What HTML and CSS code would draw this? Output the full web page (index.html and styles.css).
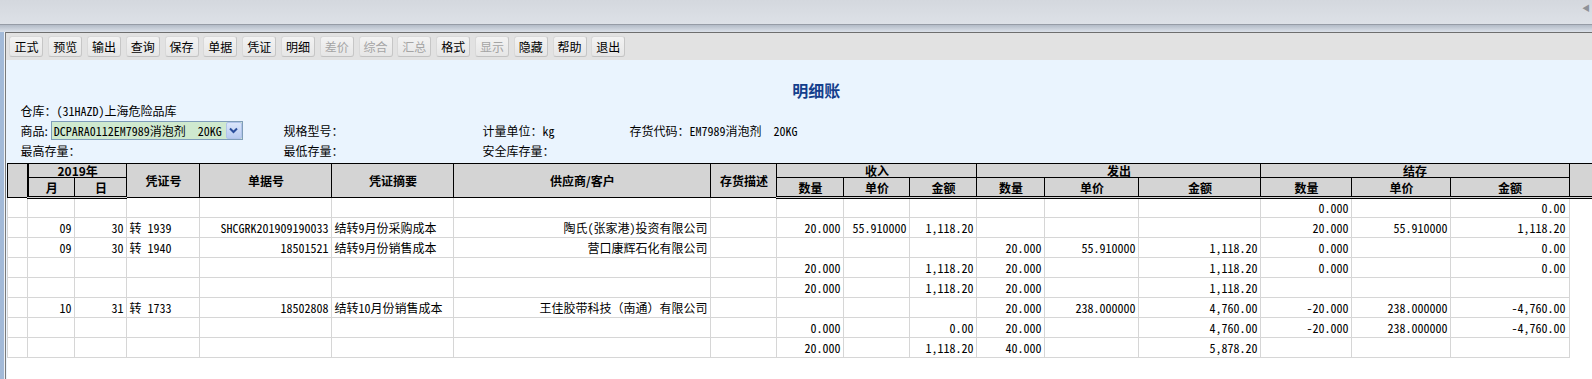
FILE: index.html
```html
<!DOCTYPE html>
<html lang="zh-CN">
<head>
    <meta charset="UTF-8">
    <title>明细账</title>
    <link rel="stylesheet" href="styles.css">
</head>
<body>
    <div class="titlebar">
        <span class="collapse">&#9664;</span>
    </div>
    <div class="rule"></div>

    <div class="main">
        <div class="side"></div>
        <div class="frame">
            <div class="toolbar">
                <span class="btn">正式</span>
                <span class="btn">预览</span>
                <span class="btn">输出</span>
                <span class="btn">查询</span>
                <span class="btn">保存</span>
                <span class="btn">单据</span>
                <span class="btn">凭证</span>
                <span class="btn">明细</span>
                <span class="btn off">差价</span>
                <span class="btn off">综合</span>
                <span class="btn off">汇总</span>
                <span class="btn">格式</span>
                <span class="btn off">显示</span>
                <span class="btn">隐藏</span>
                <span class="btn">帮助</span>
                <span class="btn">退出</span>
            </div>

            <div class="content">
                <div class="title">明细账</div>

                <div class="info">
                    <div class="wide">仓库：<span class="mono">(31HAZD)</span>上海危险品库</div>
                    <div class="goods">
                        <span>商品:</span>
                        <div class="select">
                            <span class="mono">DCPARA0112EM7989消泡剂  20KG</span>
                            <span class="drop">
                                <svg width="9" height="7" viewBox="0 0 9 7"><path d="M1 1.5 L4.5 5 L8 1.5" fill="none" stroke="#2b4f9c" stroke-width="2"/></svg>
                            </span>
                        </div>
                    </div>
                    <div>规格型号：</div>
                    <div>计量单位：<span class="mono">kg</span></div>
                    <div>存货代码：<span class="mono">EM7989消泡剂  20KG</span></div>
                    <div>最高存量：</div>
                    <div>最低存量：</div>
                    <div>安全库存量：</div>
                    <div></div>
                </div>

                <div class="grid-wrap">
                    <table class="ledger">
                        <colgroup>
                            <col style="width:20px"><col style="width:47px"><col style="width:52px">
                            <col style="width:73px"><col style="width:132px"><col style="width:122px">
                            <col style="width:257px"><col style="width:66px">
                            <col style="width:67px"><col style="width:66px"><col style="width:67px">
                            <col style="width:68px"><col style="width:94px"><col style="width:122px">
                            <col style="width:91px"><col style="width:99px"><col style="width:118px">
                            <col style="width:23px">
                        </colgroup>
                        <thead>
                            <tr class="r1">
                                <th rowspan="2"></th>
                                <th colspan="2" class="ym">2019年</th>
                                <th rowspan="2">凭证号</th>
                                <th rowspan="2">单据号</th>
                                <th rowspan="2">凭证摘要</th>
                                <th rowspan="2">供应商/客户</th>
                                <th rowspan="2">存货描述</th>
                                <th colspan="3">收入</th>
                                <th colspan="3">发出</th>
                                <th colspan="3">结存</th>
                                <th rowspan="2" class="filler"></th>
                            </tr>
                            <tr class="r2">
                                <th class="ym">月</th>
                                <th>日</th>
                                <th>数量</th><th>单价</th><th>金额</th>
                                <th>数量</th><th>单价</th><th>金额</th>
                                <th>数量</th><th>单价</th><th>金额</th>
                            </tr>
                        </thead>
                        <tbody>
                            <tr>
                                <td></td><td></td><td></td><td></td><td></td><td></td><td></td><td></td>
                                <td></td><td></td><td></td>
                                <td></td><td></td><td></td>
                                <td>0.000</td><td></td><td>0.00</td>
                                <td class="blank"></td>
                            </tr>
                            <tr>
                                <td></td><td>09</td><td>30</td><td class="l">转 1939</td><td>SHCGRK201909190033</td>
                                <td class="l">结转9月份采购成本</td><td>陶氏(张家港)投资有限公司</td><td></td>
                                <td>20.000</td><td>55.910000</td><td>1,118.20</td>
                                <td></td><td></td><td></td>
                                <td>20.000</td><td>55.910000</td><td>1,118.20</td>
                                <td class="blank"></td>
                            </tr>
                            <tr>
                                <td></td><td>09</td><td>30</td><td class="l">转 1940</td><td>18501521</td>
                                <td class="l">结转9月份销售成本</td><td>营口康辉石化有限公司</td><td></td>
                                <td></td><td></td><td></td>
                                <td>20.000</td><td>55.910000</td><td>1,118.20</td>
                                <td>0.000</td><td></td><td>0.00</td>
                                <td class="blank"></td>
                            </tr>
                            <tr>
                                <td></td><td></td><td></td><td></td><td></td><td></td><td></td><td></td>
                                <td>20.000</td><td></td><td>1,118.20</td>
                                <td>20.000</td><td></td><td>1,118.20</td>
                                <td>0.000</td><td></td><td>0.00</td>
                                <td class="blank"></td>
                            </tr>
                            <tr>
                                <td></td><td></td><td></td><td></td><td></td><td></td><td></td><td></td>
                                <td>20.000</td><td></td><td>1,118.20</td>
                                <td>20.000</td><td></td><td>1,118.20</td>
                                <td></td><td></td><td></td>
                                <td class="blank"></td>
                            </tr>
                            <tr>
                                <td></td><td>10</td><td>31</td><td class="l">转 1733</td><td>18502808</td>
                                <td class="l">结转10月份销售成本</td><td>王佳胶带科技（南通）有限公司</td><td></td>
                                <td></td><td></td><td></td>
                                <td>20.000</td><td>238.000000</td><td>4,760.00</td>
                                <td>-20.000</td><td>238.000000</td><td>-4,760.00</td>
                                <td class="blank"></td>
                            </tr>
                            <tr>
                                <td></td><td></td><td></td><td></td><td></td><td></td><td></td><td></td>
                                <td>0.000</td><td></td><td>0.00</td>
                                <td>20.000</td><td></td><td>4,760.00</td>
                                <td>-20.000</td><td>238.000000</td><td>-4,760.00</td>
                                <td class="blank"></td>
                            </tr>
                            <tr>
                                <td></td><td></td><td></td><td></td><td></td><td></td><td></td><td></td>
                                <td>20.000</td><td></td><td>1,118.20</td>
                                <td>40.000</td><td></td><td>5,878.20</td>
                                <td></td><td></td><td></td>
                                <td class="blank"></td>
                            </tr>
                        </tbody>
                    </table>
                </div>
            </div>
        </div>
    </div>
</body>
</html>
```

FILE: styles.css
```css
* {
    margin: 0;
    padding: 0;
    box-sizing: border-box;
}

body {
    width: 1592px;
    height: 379px;
    overflow: hidden;
    background: #eaf4fe;
    color: #000;
    font-family: "Noto Sans CJK SC", sans-serif;
    font-size: 12px;
}

.mono {
    font-family: "Noto Sans Mono CJK SC", "Noto Sans CJK SC", monospace;
}

/* window chrome */
.titlebar {
    height: 25px;
    background: linear-gradient(#d4d8de, #dde1e7);
    border-bottom: 1px solid #969ca6;
    display: flex;
    justify-content: flex-end;
    align-items: flex-start;
}

.collapse {
    font-size: 8px;
    color: #8e9298;
    line-height: 8px;
    margin: 4px 2px 0 0;
}

.rule {
    height: 7px;
    background: linear-gradient(#b3bbc7, #dce2ea);
}

.main {
    display: flex;
    height: 347px;
}

.side {
    width: 6px;
    background: #a3bad8;
    border-right: 1px solid #eef2f6;
}

.frame {
    flex: 1;
    border-left: 1px solid #7a7a7a;
    display: flex;
    flex-direction: column;
}

/* toolbar */
.toolbar {
    height: 28px;
    border-top: 1px solid #6e6e6e;
    background: #e2e2e2;
    display: flex;
    gap: 4.8px;
    padding: 3px 0 0 3px;
}

.btn {
    width: 34px;
    height: 21px;
    line-height: 19px;
    text-align: center;
    background: linear-gradient(#f3f3f3, #e6e6e6);
    border: 1px solid #d9d9d9;
    border-right-color: #c6c6c6;
    border-bottom-color: #c2c2c2;
    border-radius: 3px;
}

.btn.off {
    color: #a4a4a4;
}

/* content */
.content {
    flex: 1;
    background: #eaf4fe;
    padding-left: 1px;
    display: flex;
    flex-direction: column;
}

.title {
    margin-top: 20px;
    height: 20px;
    line-height: 20px;
    padding-left: 33px;
    text-align: center;
    font-size: 16px;
    font-weight: bold;
    color: #143f8c;
}

.info {
    padding-left: 13px;
    display: grid;
    grid-template-columns: 263px 199px 147px auto;
    grid-auto-rows: 20px;
    align-items: center;
    white-space: pre;
}

.info .wide {
    grid-column: 1 / -1;
}

.goods {
    display: flex;
    align-items: center;
    gap: 3px;
}

.select {
    width: 192px;
    height: 19px;
    border: 1px solid #7f9db9;
    background: #cfe9cf;
    display: flex;
    align-items: center;
    justify-content: space-between;
    padding-left: 2px;
}

.drop {
    width: 16px;
    height: 17px;
    background: linear-gradient(#dbe6fb, #b8cbf0);
    border: 1px solid #b1c4ea;
    border-radius: 2px;
    display: flex;
    align-items: center;
    justify-content: center;
}

/* ledger grid */
.grid-wrap {
    margin-top: 3px;
    flex: 1;
    background: #fff;
}

.ledger {
    table-layout: fixed;
    width: 1584px;
    border-collapse: collapse;
}

.ledger th {
    background: #d4d4d4;
    border: 1px solid #000;
    font-weight: bold;
    font-size: 12px;
    padding: 0;
    text-align: center;
    line-height: 13px;
}

.ledger .r1 th {
    height: 14px;
}

.ledger .r2 th {
    height: 20px;
    border-bottom: 3px double #000;
}

.ledger th.ym {
    border-left: 2px solid #000;
}

.ledger th.filler {
    border-right: none;
    border-bottom: 3px double #000;
}

.ledger td {
    height: 20px;
    border: 1px solid #d6d6d6;
    padding: 0 3px 0 2px;
    text-align: right;
    white-space: pre;
    overflow: hidden;
    font-family: "Noto Sans Mono CJK SC", "Noto Sans CJK SC", monospace;
    line-height: 18px;
}

.ledger td.l {
    text-align: left;
}

.ledger td.blank {
    border: none;
}
```
